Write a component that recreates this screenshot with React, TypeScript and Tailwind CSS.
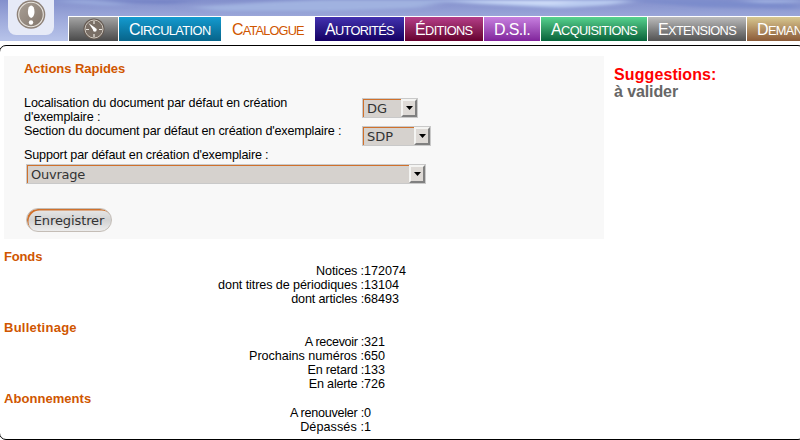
import React from 'react';

type Tab = { label: string; box: string };

const tabs: Tab[] = [
  { label: 'Circulation', box: 'w-[102px] tracking-[-0.6px] bg-linear-to-b from-[#149bd0] to-[#07648a] text-white' },
  { label: 'Catalogue', box: 'w-[92px] tracking-[-0.85px] bg-white text-[#d05600]' },
  { label: 'Autorités', box: 'w-[89px] tracking-[-0.7px] bg-linear-to-b from-[#4331b0] to-[#150063] text-white' },
  { label: 'Éditions', box: 'w-[78px] tracking-[-0.64px] bg-linear-to-b from-[#b53d89] to-[#66002f] text-white' },
  { label: 'D.S.I.', box: 'w-[56px] tracking-[-0.64px] bg-linear-to-b from-[#c77fdf] to-[#80229b] text-white' },
  { label: 'Acquisitions', box: 'w-[106px] tracking-[-0.64px] bg-linear-to-b from-[#56d38f] to-[#05633a] text-white' },
  { label: 'Extensions', box: 'w-[98px] tracking-[-0.66px] bg-linear-to-b from-[#bcbcbc] to-[#525252] text-white' },
  { label: 'Demandes', box: 'w-[104px] tracking-[-0.64px] bg-linear-to-b from-[#d8c890] to-[#8a5a38] text-white' },
];

function Sky() {
  return (
    <svg className="absolute inset-0 h-[41px] w-[800px]" viewBox="0 0 800 41" preserveAspectRatio="none">
      <defs>
        <linearGradient id="sky" x1="0" y1="0" x2="0" y2="1">
          <stop offset="0" stopColor="#8390cc" />
          <stop offset="0.4" stopColor="#9aa6d9" />
          <stop offset="1" stopColor="#b8c4ea" />
        </linearGradient>
        <filter id="soft" x="-20%" y="-100%" width="140%" height="300%">
          <feGaussianBlur stdDeviation="8 1.5" />
        </filter>
      </defs>
      <rect width="800" height="41" fill="url(#sky)" />
      <g filter="url(#soft)">
        <path d="M55 0H90L130 4L110 6L70 3Z" fill="#98a9dc" />
        <path d="M100 0H200L170 4L130 3Z" fill="#7483c6" />
        <path d="M190 7L270 2L320 0H450L420 8L330 11L220 11Z" fill="#a0b2e0" />
        <path d="M430 0H640L610 5L560 8L480 4Z" fill="#b9cbf0" />
        <path d="M470 1H580L550 5Z" fill="#cfdcf8" />
        <path d="M620 0H720L800 4V9L700 7Z" fill="#7c8ccc" />
        <path d="M740 0H800V2L760 3Z" fill="#a3b5e4" />
      </g>
    </svg>
  );
}

function Gauge() {
  return (
    <svg className="h-[22px] w-[22px]" viewBox="0 0 22 22">
      <circle cx="11" cy="11" r="10.6" fill="#655a52" />
      <circle cx="11" cy="11" r="9" fill="#7a6f66" stroke="#cfc8bf" strokeWidth="1" />
      <path d="M11 3V6M11 16V19M3 11.5H6M16 11.5H19" stroke="#e8e4de" strokeWidth="1.2" />
      <path d="M5.5 5L12.5 10L10.5 12.5Z" fill="#fff" />
      <circle cx="11.8" cy="11.8" r="1.9" fill="#fff" />
    </svg>
  );
}

function AlertBadge() {
  return (
    <div className="absolute left-[8px] top-[-10px] h-[45px] w-[46px] rounded-[8px] bg-[#e6eaf7]">
      <svg className="ml-[8px] mt-[10px] h-[30px] w-[30px]" viewBox="0 0 30 30">
        <defs>
          <linearGradient id="badge" x1="0" y1="0" x2="1" y2="1">
            <stop offset="0" stopColor="#aaa096" />
            <stop offset="1" stopColor="#82766c" />
          </linearGradient>
        </defs>
        <circle cx="15" cy="14.5" r="14.3" fill="#8d8177" />
        <circle cx="15" cy="14.5" r="12.3" fill="url(#badge)" stroke="#e9e5df" strokeWidth="1.1" />
        <ellipse cx="15.2" cy="11.7" rx="3.3" ry="6.2" fill="#fff" />
        <circle cx="15" cy="22.5" r="2.2" fill="#fff" />
      </svg>
    </div>
  );
}

function Select({ value, box }: { value: string; box: string }) {
  return (
    <div
      className={`flex h-5 border border-[#c9c9c9] bg-[#d6d2ce] font-['DejaVu_Sans',sans-serif] text-[13px] text-[#333] ${box}`}
    >
      <div className="flex-1 pl-1 pt-px leading-[18px] shadow-[inset_1px_1px_0_#d0712c]">{value}</div>
      <div className="flex h-[18px] w-4 items-center justify-center border-2 border-b-[#808080] border-l-[#f4f4f2] border-r-[#808080] border-t-[#f4f4f2] bg-[#dedad6]">
        <svg className="h-1 w-[7px]" viewBox="0 0 7 4">
          <path d="M0 0H7L3.5 4Z" fill="#000" />
        </svg>
      </div>
    </div>
  );
}

type Row = { label: string; value: string; fit: string };

function Stats({ rows }: { rows: Row[] }) {
  return (
    <div>
      {rows.map((r) => (
        <div key={r.label} className="flex h-[14px]">
          <div className={`w-[360px] text-right ${r.fit}`}>{r.label} :</div>
          <div>{r.value}</div>
        </div>
      ))}
    </div>
  );
}

const fonds: Row[] = [
  { label: 'Notices', value: '172074', fit: 'tracking-[-0.12px]' },
  { label: 'dont titres de périodiques', value: '13104', fit: 'tracking-[-0.09px]' },
  { label: 'dont articles', value: '68493', fit: 'tracking-[-0.14px]' },
];

const bulletinage: Row[] = [
  { label: 'A recevoir', value: '321', fit: 'tracking-[-0.32px]' },
  { label: 'Prochains numéros', value: '650', fit: 'tracking-[-0.03px]' },
  { label: 'En retard', value: '133', fit: 'tracking-[-0.22px]' },
  { label: 'En alerte', value: '726', fit: 'tracking-[-0.2px]' },
];

const abonnements: Row[] = [
  { label: 'A renouveler', value: '0', fit: 'tracking-[-0.26px]' },
  { label: 'Dépassés', value: '1', fit: 'tracking-[0.08px]' },
];

function Heading({ children, fit = '' }: { children: React.ReactNode; fit?: string }) {
  return <h3 className={`h-[15px] text-[13px] font-bold leading-[15px] text-[#d05600] ${fit}`}>{children}</h3>;
}

export default function App() {
  return (
    <div className="relative h-[440px] w-[800px] overflow-hidden bg-white font-['Liberation_Sans',Arial,sans-serif] text-[12.6px] leading-[14px] text-black">
      <header className="relative h-[45px] overflow-hidden">
        <Sky />
        <AlertBadge />
        <nav className="relative ml-[68px] mt-4 flex h-[25px] w-[850px] gap-px bg-white pl-px pt-px">
          <div className="flex w-[49px] items-center justify-center bg-linear-to-b from-[#a5a5a5] to-[#4a4a4a]">
            <Gauge />
          </div>
          {tabs.map((t) => (
            <div key={t.label} className={`shrink-0 whitespace-nowrap pl-[10px] text-[16px] leading-[26px] ${t.box}`}>
              {t.label[0]}
              <span className={t.label === 'D.S.I.' ? '' : 'text-[12.8px] uppercase'}>{t.label.slice(1)}</span>
            </div>
          ))}
        </nav>
      </header>
      <main className="-ml-px flex h-[395px] w-[806px] rounded-[7px] border border-black pl-1 pt-[10px]">
        <div className="w-[600px]">
          <section className="h-[183px] bg-[#f8f8f8] pl-5 pt-[5px]">
            <Heading fit="tracking-[-0.04px]">Actions Rapides</Heading>
            <div className="mt-5 flex h-7">
              <div className="w-[338px] pr-10 tracking-[-0.12px]">
                Localisation du document par défaut en création d'exemplaire :
              </div>
              <Select value="DG" box="mt-[2px] w-[56px]" />
            </div>
            <div className="flex h-6">
              <div className="w-[338px] tracking-[-0.15px]">
                Section du document par défaut en création d'exemplaire :
              </div>
              <Select value="SDP" box="mt-[2px] w-[69px]" />
            </div>
            <div className="h-4 tracking-[-0.16px]">Support par défaut en création d'exemplaire :</div>
            <Select value="Ouvrage" box="ml-[2px] w-[400px] tracking-[-0.25px]" />
            <button className="ml-[2px] mt-6 block h-6 w-[86px] whitespace-nowrap rounded-full border border-[#c4bdb6] bg-linear-to-b from-[#e8e8e8] via-[#d2d2d2] to-[#ececec] pt-[2px] font-['DejaVu_Sans',sans-serif] text-[13px] leading-5 tracking-[-0.1px] text-[#333] shadow-[inset_1.5px_1.5px_0.5px_#d0712c]">
              Enregistrer
            </button>
          </section>
          <section className="mt-[10px]">
            <Heading fit="tracking-[-0.15px]">Fonds</Heading>
            <Stats rows={fonds} />
          </section>
          <section className="mt-[14px]">
            <Heading fit="tracking-[0.25px]">Bulletinage</Heading>
            <Stats rows={bulletinage} />
          </section>
          <section>
            <Heading fit="tracking-[0.05px]">Abonnements</Heading>
            <Stats rows={abonnements} />
          </section>
        </div>
        <aside className="pl-[10px] pt-[10px] text-[16px] font-bold leading-[17px]">
          <p className="tracking-[0.1px] text-[#f00]">Suggestions:</p>
          <p className="tracking-[-0.1px] text-[#666]">à valider</p>
        </aside>
      </main>
    </div>
  );
}
